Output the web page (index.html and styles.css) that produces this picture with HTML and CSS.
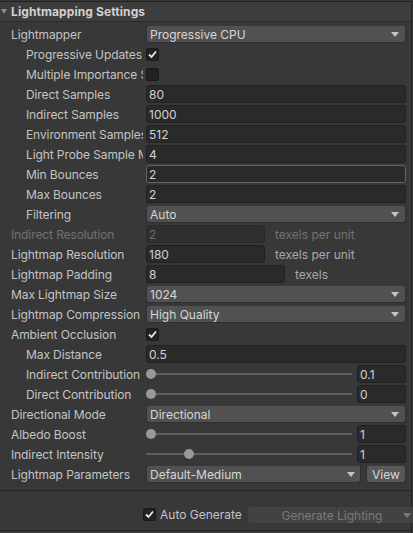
FILE: index.html
```html
<!DOCTYPE html>
<html>
<head>
<meta charset="utf-8">
<link rel="stylesheet" href="styles.css">
</head>
<body>
<div class="panel">
  <div class="header">
    <span class="fold"></span>
    <span class="title">Lightmapping Settings</span>
  </div>
  <div class="rows">
    <div class="row"><div class="label">Lightmapper</div><div class="field dropdown"><span>Progressive CPU</span><i class="arrow"></i></div></div>
    <div class="row"><div class="label ind">Progressive Updates</div><div class="check on"><svg viewBox="0 0 13 13"><polyline points="3,6.5 5.5,9 10,3.5"/></svg></div></div>
    <div class="row"><div class="label ind">Multiple Importance Sampling</div><div class="check"></div></div>
    <div class="row"><div class="label ind">Direct Samples</div><div class="field text">80</div></div>
    <div class="row"><div class="label ind">Indirect Samples</div><div class="field text">1000</div></div>
    <div class="row"><div class="label ind">Environment Samples</div><div class="field text">512</div></div>
    <div class="row"><div class="label ind">Light Probe Sample Multiplier</div><div class="field text">4</div></div>
    <div class="row"><div class="label ind">Min Bounces</div><div class="field text hover">2</div></div>
    <div class="row"><div class="label ind">Max Bounces</div><div class="field text">2</div></div>
    <div class="row"><div class="label ind">Filtering</div><div class="field dropdown"><span>Auto</span><i class="arrow"></i></div></div>
    <div class="row"><div class="label dis">Indirect Resolution</div><div class="text short disabled">2</div><div class="unit dis">texels per unit</div></div>
    <div class="row"><div class="label">Lightmap Resolution</div><div class="text short">180</div><div class="unit">texels per unit</div></div>
    <div class="row"><div class="label">Lightmap Padding</div><div class="text mid">8</div><div class="unit">texels</div></div>
    <div class="row"><div class="label">Max Lightmap Size</div><div class="field dropdown"><span>1024</span><i class="arrow"></i></div></div>
    <div class="row"><div class="label">Lightmap Compression</div><div class="field dropdown"><span>High Quality</span><i class="arrow"></i></div></div>
    <div class="row"><div class="label">Ambient Occlusion</div><div class="check on"><svg viewBox="0 0 13 13"><polyline points="3,6.5 5.5,9 10,3.5"/></svg></div></div>
    <div class="row"><div class="label ind">Max Distance</div><div class="field text">0.5</div></div>
    <div class="row"><div class="label ind">Indirect Contribution</div><div class="slider"><div class="track"></div><div class="thumb" style="left:0px"></div></div><div class="text num">0.1</div></div>
    <div class="row"><div class="label ind">Direct Contribution</div><div class="slider"><div class="track"></div><div class="thumb" style="left:0px"></div></div><div class="text num">0</div></div>
    <div class="row"><div class="label">Directional Mode</div><div class="field dropdown"><span>Directional</span><i class="arrow"></i></div></div>
    <div class="row"><div class="label">Albedo Boost</div><div class="slider"><div class="track"></div><div class="thumb" style="left:0px"></div></div><div class="text num">1</div></div>
    <div class="row"><div class="label">Indirect Intensity</div><div class="slider"><div class="track"></div><div class="thumb" style="left:38px"></div></div><div class="text num">1</div></div>
    <div class="row"><div class="label">Lightmap Parameters</div><div class="field dropdown params"><span>Default-Medium</span><i class="arrow"></i></div><div class="button">View</div></div>
  </div>
  <div class="footer">
    <div class="auto">
      <div class="check on"><svg viewBox="0 0 13 13"><polyline points="3,6.5 5.5,9 10,3.5"/></svg></div>
      <span>Auto Generate</span>
    </div>
    <div class="generate"><span>Generate Lighting</span><i class="arrow"></i></div>
  </div>
</div>
</body>
</html>
```

FILE: styles.css
```css
html, body {
  margin: 0;
  padding: 0;
  overflow: hidden;
}
body {
  background: #383838;
  font-family: Inter, "Noto Sans", sans-serif;
  font-size: 12px;
  color: #c4c4c4;
  width: 413px;
  height: 533px;
}
.panel {
  width: 411px;
  height: 533px;
  border-right: 1px solid #232323;
  background: #383838;
}
.header {
  height: 19px;
  border-top: 1px solid #1f1f1f;
  margin-top: 1px;
  border-bottom: 1px solid #2a2a2a;
  background: #3d3d3d;
  display: flex;
  align-items: center;
}
.fold {
  width: 0;
  height: 0;
  border-left: 3.5px solid transparent;
  border-right: 3.5px solid transparent;
  border-top: 5px solid #8c8c8c;
  margin-left: 1px;
  margin-right: 4px;
}
.title {
  font-weight: 700;
  color: #d2d2d2;
  letter-spacing: 0.1px;
}
.rows {
  padding-top: 2px;
}
.row {
  height: 20px;
  display: flex;
  align-items: center;
  padding-right: 5px;
}
.label {
  padding-left: 11px;
  flex: none;
  white-space: nowrap;
  overflow: hidden;
  box-sizing: content-box;
  width: 132px;
  margin-right: 3px;
  letter-spacing: -0.1px;
}
.label.ind {
  padding-left: 26px;
  width: 117px;
}
.label.dis, .unit.dis {
  color: #727272;
}
.field {
  flex: 1;
  box-sizing: border-box;
  height: 18px;
  border-radius: 3px;
  display: flex;
  align-items: center;
  white-space: nowrap;
  overflow: hidden;
}
.dropdown {
  background: #515151;
  border: 1px solid #303030;
  border-top-color: #3a3a3a;
  padding: 0 6px 0 3px;
  color: #d6d6d6;
}
.dropdown span {
  flex: 1;
}
.arrow {
  width: 0;
  height: 0;
  border-left: 4px solid transparent;
  border-right: 4px solid transparent;
  border-top: 5px solid #c4c4c4;
}
.text {
  box-sizing: border-box;
  height: 18px;
  background: #2a2a2a;
  border: 1px solid #212121;
  border-radius: 3px;
  padding: 0 2px;
  color: #d2d2d2;
  display: flex;
  align-items: center;
}
.text.hover {
  border-color: #656565;
}
.text.short {
  width: 119px;
  flex: none;
}
.text.mid {
  width: 139px;
  flex: none;
}
.text.disabled {
  background: #2f2f2f;
  border-color: #2a2a2a;
  color: #6e6e6e;
}
.unit {
  margin-left: 10px;
  color: #a8a8a8;
  white-space: nowrap;
}
.check {
  box-sizing: border-box;
  width: 13px;
  height: 13px;
  background: #212121;
  border: 1px solid #191919;
  border-radius: 2px;
  flex: none;
  display: flex;
  align-items: center;
  justify-content: center;
}
.check svg {
  width: 13px;
  height: 13px;
  flex: none;
}
.check polyline {
  fill: none;
  stroke: #ececec;
  stroke-width: 1.8;
}
.slider {
  flex: 1;
  height: 18px;
  position: relative;
  display: flex;
  align-items: center;
  margin-right: 5px;
}
.track {
  flex: 1;
  height: 2px;
  background: #5e5e5e;
}
.thumb {
  position: absolute;
  top: 4px;
  width: 10px;
  height: 10px;
  border-radius: 50%;
  background: #999999;
}
.text.num {
  width: 49px;
  flex: none;
}
.params {
  flex: 1;
  padding-right: 5px;
}
.button {
  box-sizing: border-box;
  width: 40px;
  height: 18px;
  margin-left: 5px;
  background: #585858;
  border: 1px solid #303030;
  border-top-color: #3c3c3c;
  border-radius: 3px;
  color: #d6d6d6;
  display: flex;
  align-items: center;
  justify-content: center;
  flex: none;
}
.footer {
  margin-top: 6px;
  border-top: 1px solid #262626;
  border-bottom: 1px solid #232323;
  height: 23px;
  padding-top: 16px;
  display: flex;
  align-items: flex-start;
  padding-left: 143px;
  background: #383838;
}
.auto {
  width: 105px;
  height: 14px;
  display: flex;
  align-items: center;
  flex: none;
}
.auto span {
  margin-left: 4px;
  color: #c4c4c4;
}
.generate {
  box-sizing: border-box;
  width: 168px;
  height: 16px;
  flex: none;
  background: #424242;
  border-radius: 2px;
  color: #7a7a7a;
  position: relative;
  display: flex;
  align-items: center;
  justify-content: center;
}
.generate .arrow {
  position: absolute;
  left: 155px;
  top: 6px;
  border-top-color: #7a7a7a;
}
```
